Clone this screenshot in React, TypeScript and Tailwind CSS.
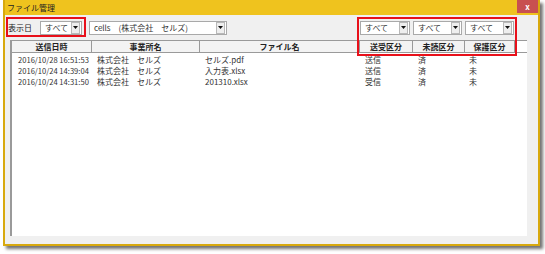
import React from 'react';

const FONT = { fontFamily: '"Noto Sans CJK JP", "Noto Sans", sans-serif' };

const rows = [
  { date: '2016/10/28 16:51:53', office: '株式会社　セルズ', file: 'セルズ.pdf', send: '送信', read: '済', prot: '未' },
  { date: '2016/10/24 14:39:04', office: '株式会社　セルズ', file: '入力表.xlsx', send: '送信', read: '済', prot: '未' },
  { date: '2016/10/24 14:31:50', office: '株式会社　セルズ', file: '201310.xlsx', send: '受信', read: '済', prot: '未' },
];

const cols = [
  { label: '送信日時', w: 'w-[80px]', pad: 'pl-[6px]' },
  { label: '事業所名', w: 'w-[108px]', pad: 'pl-[5px]' },
  { label: 'ファイル名', w: 'w-[160px]', pad: 'pl-[5px]' },
  { label: '送受区分', w: 'w-[53px]', pad: 'pl-[5px]' },
  { label: '未読区分', w: 'w-[52px]', pad: 'pl-[5px]' },
  { label: '保護区分', w: 'w-[50px]', pad: 'pl-[4px]' },
];

// combo box with the little drop-down button
const Combo = ({ text, w }: { text: string; w: string }) => (
  <div className={`${w} h-[14px] bg-white border border-[#a9a9a9] flex items-center justify-between`}>
    <span className="pl-[4px] text-[8px] leading-none text-[#333] whitespace-nowrap">{text}</span>
    <div className="w-[9px] h-[12px] mr-[1px] bg-[#eeeeee] border border-[#b8b8b8] flex items-center justify-center">
      <svg width="5" height="3" viewBox="0 0 5 3">
        <path d="M0 0 H5 L2.5 3 Z" fill="#111" />
      </svg>
    </div>
  </div>
);

export default function App() {
  return (
    <div className="w-[545px] h-[254px] bg-white pl-[3px]" style={FONT}>
      <div className="relative w-[537px] h-[246px] border-2 border-t-0 border-[#d8a90e] bg-[#f0f0f0] shadow-[3px_3px_3px_rgba(0,0,0,0.55)] flex flex-col">
        {/* title bar */}
        <div className="h-[15px] bg-[#efc31e] flex items-start justify-between shrink-0">
          <span className="pl-[2px] pt-[2px] text-[8px] leading-[11px] text-[#222]">ファイル管理</span>
          <div className="w-[21px] h-[13px] bg-[#c85050] flex items-center justify-center text-white text-[8px] font-bold leading-none">x</div>
        </div>

        {/* filter row */}
        <div className="h-[25px] flex items-center shrink-0">
          <span className="pl-[3px] w-[35px] text-[8px] leading-none text-[#222]">表示日</span>
          <Combo text="すべて" w="w-[42px]" />
          <div className="w-[7px]" />
          <Combo text="cells　(株式会社　セルズ)" w="w-[138px]" />
          <div className="flex-1" />
          <div className="flex gap-[3px] mr-[24px]">
            <Combo text="すべて" w="w-[50px]" />
            <Combo text="すべて" w="w-[49px]" />
            <Combo text="すべて" w="w-[49px]" />
          </div>
        </div>

        {/* list view */}
        <div className="ml-[5px] w-[517px] h-[196px] bg-white border-l-2 border-t border-[#9a9a9a] text-[8px] text-[#333]">
          <div className="flex h-[12px] border-b border-[#9a9a9a] bg-[#f3f3f3] text-[#222]">
            {cols.map((c) => (
              <div key={c.label} className={`${c.w} border-r border-[#9a9a9a] flex items-center justify-center font-bold leading-none`}>
                {c.label}
              </div>
            ))}
            <div className="flex-1 bg-white" />
          </div>
          <div className="pt-[1px]">
            {rows.map((r) => (
              <div key={r.date} className="flex h-[11px] items-center leading-none whitespace-nowrap">
                <div className={`${cols[0].w} ${cols[0].pad} text-[7.6px]`}>{r.date}</div>
                <div className={`${cols[1].w} ${cols[1].pad}`}>{r.office}</div>
                <div className={`${cols[2].w} ${cols[2].pad}`}>{r.file}</div>
                <div className={`${cols[3].w} ${cols[3].pad}`}>{r.send}</div>
                <div className={`${cols[4].w} ${cols[4].pad}`}>{r.read}</div>
                <div className={`${cols[5].w} ${cols[5].pad}`}>{r.prot}</div>
              </div>
            ))}
          </div>
        </div>

        {/* red annotation boxes */}
        <div className="absolute left-[1px] top-[17px] w-[80px] h-[20px] border-2 border-[#e8101a]" />
        <div className="absolute left-[352px] top-[17px] w-[160px] h-[39px] border-2 border-[#e8101a]" />
      </div>
    </div>
  );
}
